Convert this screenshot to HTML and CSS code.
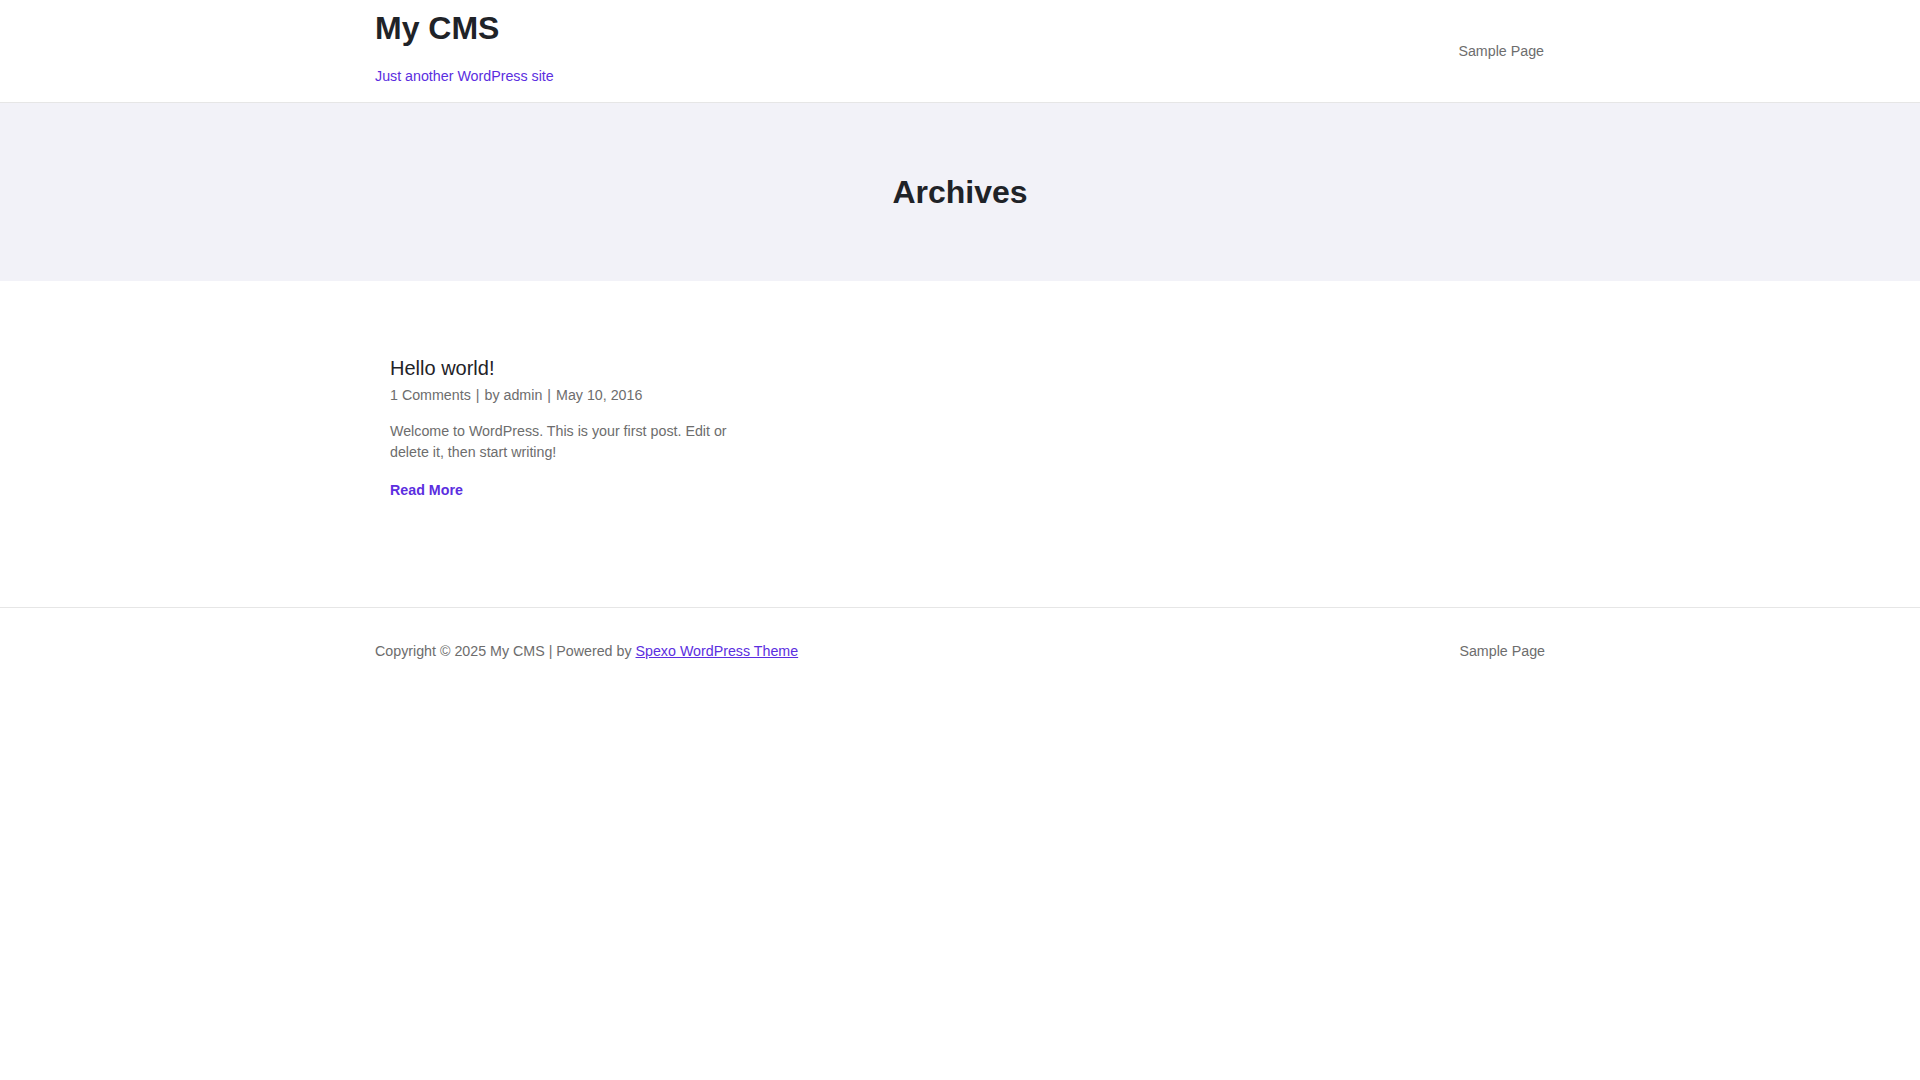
FILE: index.html
```html
<!DOCTYPE html>
<html lang="en">
<head>
<meta charset="utf-8">
<title>Archives – My CMS</title>
<link rel="stylesheet" href="styles.css">
</head>
<body>
<header class="site-header">
  <div class="container header-inner">
    <div class="branding">
      <a class="site-title" href="#">My CMS</a>
      <p class="site-tagline">Just another WordPress site</p>
    </div>
    <nav class="main-nav">
      <a href="#">Sample Page</a>
    </nav>
  </div>
</header>

<section class="page-banner">
  <h1 class="page-title">Archives</h1>
</section>

<main class="container content">
  <div class="post-grid">
    <article class="post">
      <h2 class="post-title"><a href="#">Hello world!</a></h2>
      <div class="post-meta">
        <a href="#">1 Comments</a><span class="sep">|</span><span>by <a href="#">admin</a></span><span class="sep">|</span><span>May 10, 2016</span>
      </div>
      <p class="post-excerpt">Welcome to WordPress. This is your first post. Edit or delete it, then start writing!</p>
      <a class="read-more" href="#">Read More</a>
    </article>
  </div>
</main>

<footer class="site-footer">
  <div class="container footer-inner">
    <p class="copyright">Copyright © 2025 My CMS | Powered by <a href="#">Spexo WordPress Theme</a></p>
    <nav class="footer-nav">
      <a href="#">Sample Page</a>
    </nav>
  </div>
</footer>
</body>
</html>
```

FILE: styles.css
```css
* {
  box-sizing: border-box;
}

html, body {
  margin: 0;
  padding: 0;
  background: #ffffff;
}

body {
  font-family: "Liberation Sans", Arial, sans-serif;
  font-size: 14.25px;
  line-height: 21px;
  color: #6d6d6d;
}

a {
  text-decoration: none;
  color: inherit;
}

p {
  margin: 0;
}

.container {
  width: 1170px;
  margin: 0 auto;
}

/* Header */
.site-header {
  border-bottom: 1px solid #e6e6e6;
}

.header-inner {
  height: 102px;
  display: flex;
  justify-content: space-between;
  align-items: center;
}

.branding {
  display: flex;
  flex-direction: column;
  padding-bottom: 6px;
}

.site-title {
  font-size: 32px;
  line-height: 38px;
  font-weight: 700;
  color: #1f2328;
}

.site-tagline {
  margin-top: 19px;
  color: #5b2ee0;
  line-height: 21px;
}

.main-nav a,
.footer-nav a {
  color: #6d6d6d;
}

.main-nav {
  padding-right: 1px;
}

/* Banner */
.page-banner {
  background: #f2f2f8;
  height: 178px;
  display: flex;
  align-items: center;
  justify-content: center;
}

.page-title {
  margin: 0;
  font-size: 32px;
  line-height: 38px;
  font-weight: 700;
  color: #1f2328;
}

/* Content */
.content {
  padding-top: 75px;
  padding-bottom: 106px;
}

.post-grid {
  display: grid;
  grid-template-columns: repeat(3, 1fr);
}

.post {
  padding: 0 14px 0 15px;
}

.post-title {
  margin: 0;
  font-size: 20px;
  line-height: 24px;
  font-weight: 400;
  color: #1f2328;
}

.post-meta {
  margin-top: 5px;
  color: #6d6d6d;
}

.post-meta .sep {
  margin: 0 5px;
}

.post-excerpt {
  margin-top: 15px;
  color: #6d6d6d;
}

.read-more {
  display: inline-block;
  margin-top: 17px;
  font-weight: 700;
  color: #5b2ee0;
}

/* Footer */
.site-footer {
  border-top: 1px solid #e6e6e6;
}

.footer-inner {
  display: flex;
  justify-content: space-between;
  align-items: center;
  padding-top: 32.5px;
  padding-bottom: 31px;
}

.copyright a {
  color: #5b2ee0;
  text-decoration: underline;
}
```
